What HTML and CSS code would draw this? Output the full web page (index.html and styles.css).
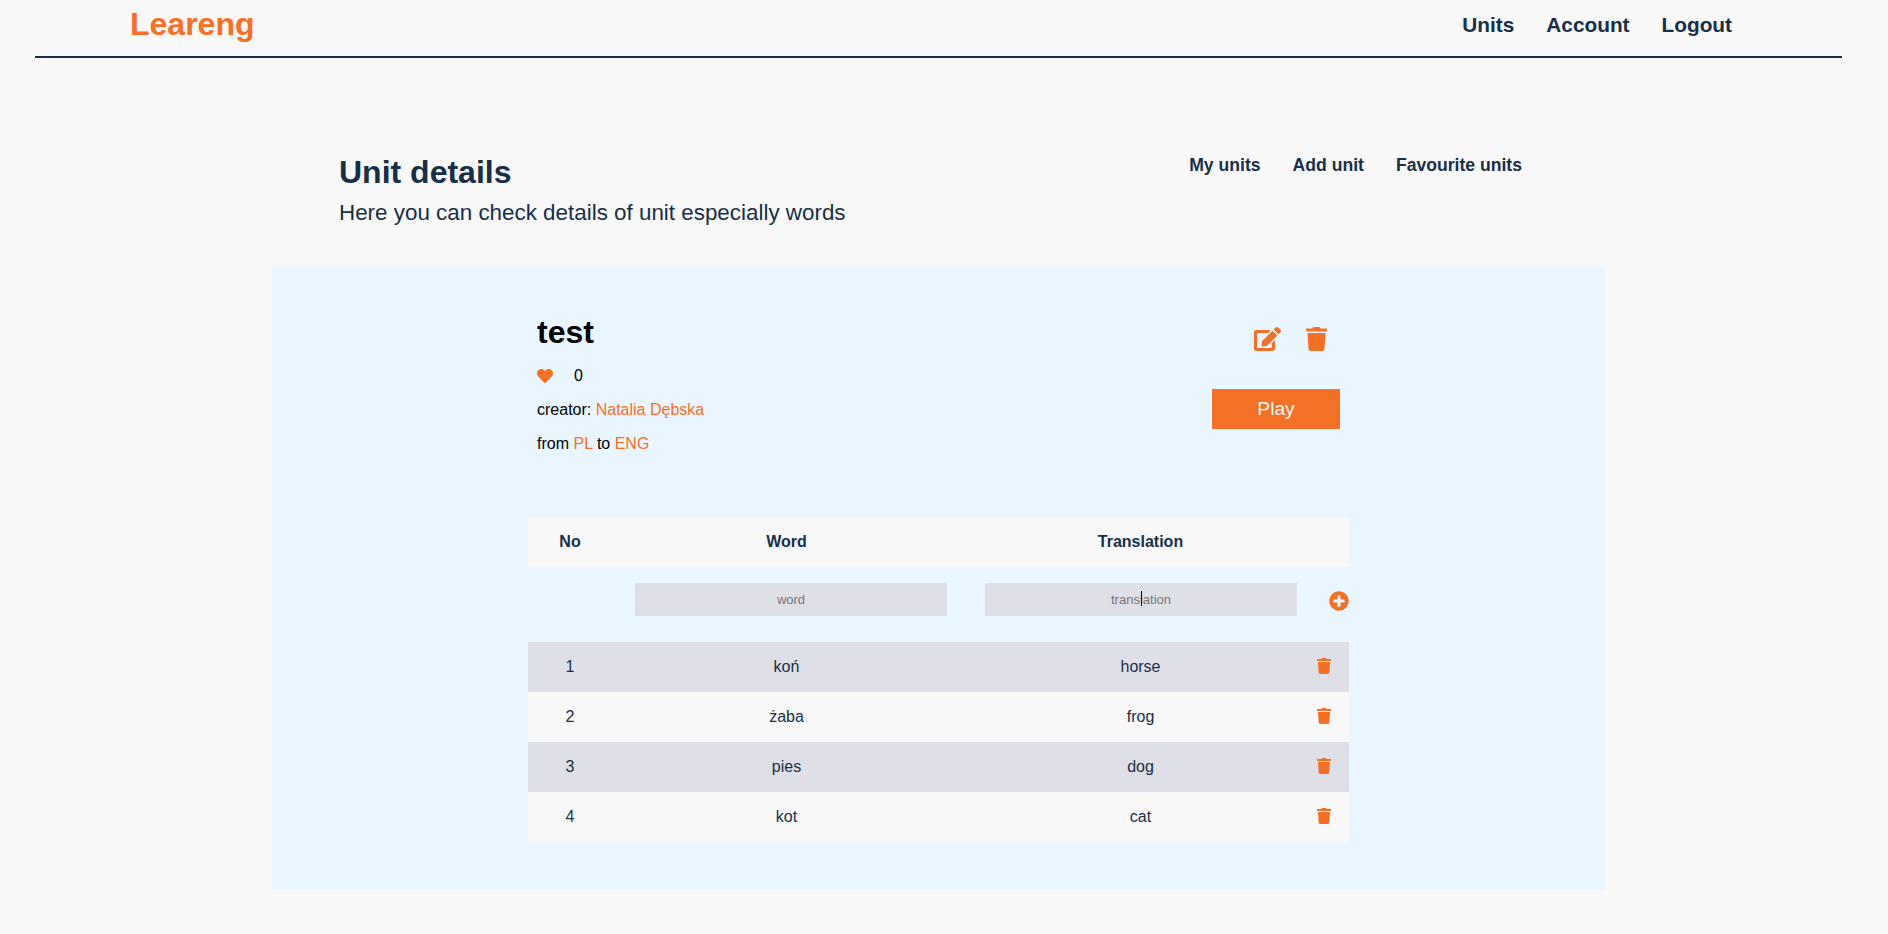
FILE: index.html
```html
<!doctype html>
<html>
<head>
<title>Leareng - Unit details</title>
<link rel="stylesheet" href="styles.css">
</head>
<body>

<svg class="defs">
  <symbol id="trash" viewBox="0 0 448 512"><path d="M432 32H312l-9.4-18.7A24 24 0 0 0 281.1 0H166.8a23.72 23.72 0 0 0-21.4 13.3L136 32H16A16 16 0 0 0 0 48v32a16 16 0 0 0 16 16h416a16 16 0 0 0 16-16V48a16 16 0 0 0-16-16zM53.2 467a48 48 0 0 0 47.9 45h245.8a48 48 0 0 0 47.9-45L416 128H32z"/></symbol>
</svg>

<header class="topbar">
  <a class="logo">Leareng</a>
  <nav class="topnav">
    <a>Units</a>
    <a>Account</a>
    <a>Logout</a>
  </nav>
</header>

<section class="intro">
  <div>
    <h1>Unit details</h1>
    <p>Here you can check details of unit especially words</p>
  </div>
  <nav class="subnav">
    <a>My units</a>
    <a>Add unit</a>
    <a>Favourite units</a>
  </nav>
</section>

<main class="panel">
  <div class="unit">
    <div class="unit-info">
      <h2>test</h2>
      <div class="likes">
        <svg class="heart" viewBox="0 0 512 512"><path d="M462.3 62.6C407.5 15.9 326 24.3 275.7 76.2L256 96.5l-19.7-20.3C186.1 24.3 104.5 15.9 49.7 62.6c-62.8 53.6-66.1 149.8-9.9 207.9l193.5 199.8c12.5 12.9 32.8 12.9 45.3 0l193.5-199.8c56.3-58.1 53-154.3-9.8-207.9z"/></svg>
        <span>0</span>
      </div>
      <p>creator: <a>Natalia Dębska</a></p>
      <p>from <a>PL</a> to <a>ENG</a></p>
    </div>
    <div class="unit-actions">
      <div class="unit-icons">
        <svg class="edit" viewBox="0 0 576 512"><path d="M402.6 83.2l90.2 90.2c3.8 3.8 3.8 10 0 13.8L274.4 405.6l-92.8 10.3c-12.4 1.4-22.9-9.1-21.5-21.5l10.3-92.8L388.8 83.2c3.8-3.8 10-3.8 13.8 0zm162-22.9l-48.8-48.8c-15.2-15.2-39.9-15.2-55.2 0l-35.4 35.4c-3.8 3.8-3.8 10 0 13.8l90.2 90.2c3.8 3.8 10 3.8 13.8 0l35.4-35.4c15.2-15.3 15.2-40 0-55.2zM384 346.2V448H64V128h229.8c3.2 0 6.2-1.3 8.5-3.5l40-40c7.6-7.6 2.2-20.5-8.5-20.5H48C21.5 64 0 85.5 0 112v352c0 26.5 21.5 48 48 48h352c26.5 0 48-21.5 48-48V306.2c0-10.7-12.9-16-20.5-8.5l-40 40c-2.2 2.3-3.5 5.3-3.5 8.5z"/></svg>
        <svg class="trash-big"><use href="#trash"/></svg>
      </div>
      <button class="play">Play</button>
    </div>
  </div>

  <div class="words">
    <div class="row head">
      <div>No</div>
      <div>Word</div>
      <div>Translation</div>
    </div>

    <form class="add-row">
      <input class="field" placeholder="word">
      <div class="field-wrap">
        <input class="field" placeholder="translation">
        <span class="caret"></span>
      </div>
      <svg class="plus" viewBox="0 0 512 512"><path d="M256 8C119 8 8 119 8 256s111 248 248 248 248-111 248-248S393 8 256 8zm144 276c0 6.6-5.4 12-12 12h-92v92c0 6.6-5.4 12-12 12h-56c-6.6 0-12-5.4-12-12v-92h-92c-6.6 0-12-5.4-12-12v-56c0-6.6 5.4-12 12-12h92v-92c0-6.6 5.4-12 12-12h56c6.6 0 12 5.4 12 12v92h92c6.6 0 12 5.4 12 12v56z"/></svg>
    </form>

    <div class="row odd">
      <div>1</div><div>koń</div><div>horse</div>
      <svg class="trash"><use href="#trash"/></svg>
    </div>
    <div class="row">
      <div>2</div><div>żaba</div><div>frog</div>
      <svg class="trash"><use href="#trash"/></svg>
    </div>
    <div class="row odd">
      <div>3</div><div>pies</div><div>dog</div>
      <svg class="trash"><use href="#trash"/></svg>
    </div>
    <div class="row">
      <div>4</div><div>kot</div><div>cat</div>
      <svg class="trash"><use href="#trash"/></svg>
    </div>
  </div>
</main>

</body>
</html>
```

FILE: styles.css
```css
body {
  margin: 0;
  background: #f8f8f8;
  color: #172f47;
  font-family: "Liberation Sans", Arial, sans-serif;
}

.defs {
  display: none;
}

/* top bar */
.topbar {
  display: flex;
  justify-content: space-between;
  align-items: center;
  height: 56px;
  margin: 0 46px 0 35px;
  padding: 0 110px 0 95px;
  border-bottom: 2px solid #172f47;
}

.logo {
  color: #f96f24;
  font-size: 32px;
  font-weight: bold;
  margin-top: -7px;
}

.topnav {
  display: flex;
  gap: 32px;
  font-size: 20.8px;
  font-weight: bold;
  margin-top: -7px;
}

/* page heading */
.intro {
  display: flex;
  justify-content: space-between;
  align-items: flex-start;
  margin: 96px 0 0 339px;
  width: 1183px;
  height: 112px;
}

.intro h1 {
  margin: 0;
  font-size: 32px;
  line-height: 37px;
}

.intro p {
  margin: 9px 0 0;
  font-size: 22.4px;
  line-height: 25px;
}

.subnav {
  display: flex;
  gap: 32px;
  margin-top: 1px;
  font-size: 17.6px;
  font-weight: bold;
}

/* blue panel */
.panel {
  width: 821px;
  height: 624px;
  margin-left: 272px;
  padding: 0 256px;
  background: #e9f6ff;
}

.unit {
  display: flex;
  justify-content: space-between;
  height: 251px;
  padding: 48px 9px 0;
  box-sizing: border-box;
  color: #000;
  font-size: 16px;
}

.unit h2 {
  margin: 0;
  font-size: 32px;
  line-height: 37px;
}

.unit p {
  margin: 16px 0 0;
  line-height: 18px;
}

.unit a {
  color: #f96f24;
}

.likes {
  display: flex;
  align-items: center;
  gap: 21px;
  height: 18px;
  margin-top: 16px;
}

.heart {
  width: 16px;
  height: 16px;
  fill: #f96f24;
}

.unit-actions {
  display: flex;
  flex-direction: column;
  align-items: flex-end;
  width: 128px;
}

.unit-icons {
  display: flex;
  gap: 25px;
  margin: 13px 13px 0 0;
  fill: #f47024;
}

.edit {
  width: 27px;
  height: 24px;
}

.trash-big {
  width: 21px;
  height: 24px;
}

.play {
  width: 128px;
  height: 40px;
  margin-top: 38px;
  padding: 0;
  border: 0;
  background: #f47024;
  color: #f8f8f8;
  font-family: inherit;
  font-size: 19.2px;
}

/* word table */
.row {
  display: grid;
  grid-template-columns: 84px 349px 359px 29px;
  align-items: center;
  height: 50px;
  background: #f8f8f8;
  font-size: 16px;
  text-align: center;
}

.row.odd {
  background: #dfdfe8;
}

.row.head {
  font-weight: bold;
}

.trash {
  justify-self: end;
  width: 14px;
  height: 16px;
  margin: 0 18px 2px 0;
  fill: #f47024;
}

.add-row {
  display: flex;
  align-items: center;
  gap: 38px;
  height: 75px;
  padding-bottom: 10px;
  padding-left: 107px;
  box-sizing: border-box;
}

.field-wrap {
  position: relative;
  display: flex;
  flex: none;
}

.field {
  flex: none;
  width: 312px;
  height: 33px;
  padding: 0;
  border: 0;
  background: #dfdfe8;
  font-family: inherit;
  font-size: 13px;
  text-align: center;
}

.field::placeholder {
  color: #757575;
  opacity: 1;
}

.caret {
  position: absolute;
  left: 156px;
  top: 8px;
  width: 1px;
  height: 15px;
  background: #000;
}

.plus {
  flex: none;
  width: 20px;
  height: 20px;
  margin: 2px 0 0 -6px;
  fill: #f47024;
}
```
